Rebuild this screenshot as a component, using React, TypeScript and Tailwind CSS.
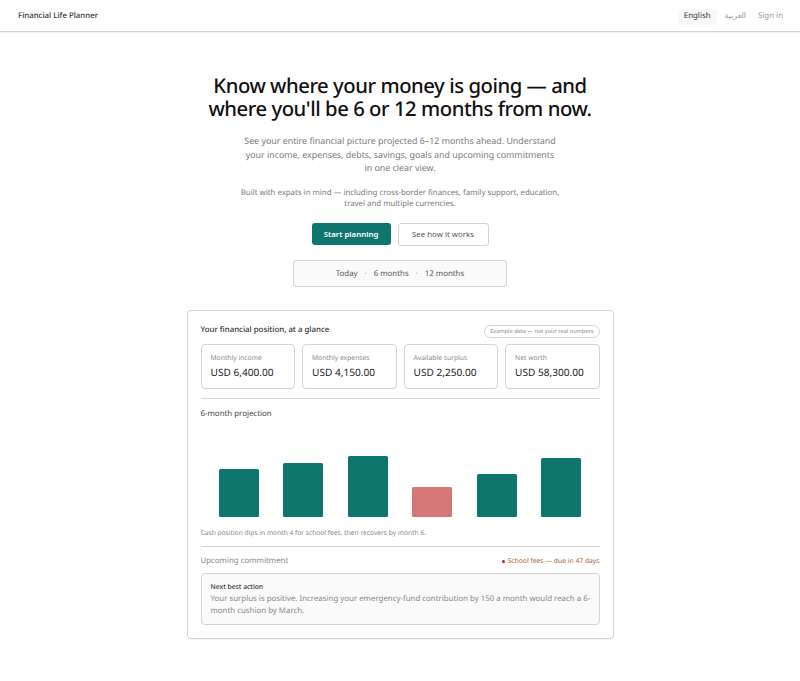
const metrics = [
  ["Monthly income", "USD 6,400.00"],
  ["Monthly expenses", "USD 4,150.00"],
  ["Available surplus", "USD 2,250.00"],
  ["Net worth", "USD 58,300.00"],
];
const bars = [
  { h: "h-[47.5px]", c: "bg-[#0f766e]" },
  { h: "h-[54px]", c: "bg-[#0f766e]" },
  { h: "h-[60.5px]", c: "bg-[#0f766e]" },
  { h: "h-[30px]", c: "bg-[#d77676]" },
  { h: "h-[43px]", c: "bg-[#0f766e]" },
  { h: "h-[58.5px]", c: "bg-[#0f766e]" },
];

export default function App() {
  return (
    <div className="min-h-[681px] bg-white font-['Noto_Sans',sans-serif] text-[#111827] [text-rendering:geometricPrecision]">
      <header className="flex h-[32px] items-center justify-between border-b border-[#d4d4d4] pt-[3px] pr-[17px] pl-[18px] shadow-[0_1px_1px_rgba(0,0,0,0.04)]">
        <div className="text-[7.875px] font-medium text-[#333333]">Financial Life Planner</div>
        <div className="flex items-center gap-[2px] text-[7.875px]">
          <span className="rounded-[4px] bg-[#f8f8f8] px-[6px] py-[2px] text-[#333333]">English</span>
          <span className="px-[6px] py-[2px] text-[#999999]">العربية</span>
          <span className="py-[2px] pl-[4px] text-[#999999]">Sign in</span>
        </div>
      </header>
      <main className="flex flex-col items-center pt-[42px]">
        <h1 className="text-center text-[20.25px] leading-[23px] font-medium tracking-[-0.45px] text-[#111111]">
          Know where your money is going — and
          <br />
          where you'll be 6 or 12 months from now.
        </h1>
        <p className="mt-[15px] w-[316px] text-center text-[8.85px] leading-[13.5px] text-[#7a7a7a]">
          See your entire financial picture projected 6–12 months ahead. Understand your income, expenses, debts, savings, goals and upcoming commitments in one clear view.
        </p>
        <p className="mt-[12px] w-[330px] text-center text-[7.83px] leading-[11.5px] text-[#7a7a7a]">
          Built with expats in mind — including cross-border finances, family support, education, travel and multiple currencies.
        </p>
        <div className="mt-[12px] flex items-center gap-[7px]">
          <button className="flex h-[22px] w-[79px] items-center justify-center rounded-[3px] bg-[#0f766e] pt-[1px] text-[7.875px] font-semibold text-white">Start planning</button>
          <button className="flex h-[23px] w-[91px] items-center justify-center rounded-[3px] border border-[#d4d4d4] bg-white pt-[1px] text-[7.875px] text-[#555555]">See how it works</button>
        </div>
        <div className="mt-[14px] flex h-[27px] w-[214px] items-center justify-center gap-[7px] rounded-[3px] border border-[#d4d4d4] bg-[#fafafa] pt-[3px] text-[7.875px] text-[#555555]">
          <span>Today</span>
          <span className="text-[#999999]">·</span>
          <span>6 months</span>
          <span className="text-[#999999]">·</span>
          <span>12 months</span>
        </div>
        <section className="mt-[23px] w-[427px] rounded-[4px] border border-[#d4d4d4] px-[13px] pt-[14px] pb-[13px] shadow-[0_1px_1px_rgba(0,0,0,0.05)]">
          <div className="flex items-center justify-between">
            <div className="text-[7.875px] font-medium text-[#333333]">Your financial position, at a glance</div>
            <div className="rounded-full border border-[#d4d4d4] px-[5px] py-[1.5px] text-[5.625px] text-[#888888]">Example data — not your real numbers</div>
          </div>
          <div className="mt-[6px] grid grid-cols-4 gap-[7px]">
            {metrics.map(([label, value]) => (
              <div key={label} className="h-[45px] rounded-[4px] border border-[#d4d4d4] px-[9px] pt-[7px]">
                <div className="text-[6.75px] leading-[11px] text-[#888888]">{label}</div>
                <div className="mt-[2px] text-[10.125px] leading-[14px] text-[#222222]">{value}</div>
              </div>
            ))}
          </div>
          <div className="mt-[9px] border-t border-[#d4d4d4]" />
          <div className="mt-[9px] text-[7.875px] leading-[12px] text-[#444444]">6-month projection</div>
          <div className="mt-[36.5px] grid h-[60.5px] grid-cols-6 items-end justify-items-center px-[6px]">
            {bars.map((b, i) => (
              <div key={i} className={`w-[40px] rounded-[1.5px] ${b.h} ${b.c}`} />
            ))}
          </div>
          <div className="mt-[10.5px] text-[6.67px] leading-[11px] text-[#888888]">Cash position dips in month 4 for school fees, then recovers by month 6.</div>
          <div className="mt-[8px] border-t border-[#d4d4d4]" />
          <div className="mt-[8px] flex items-center justify-between">
            <div className="text-[7.875px] leading-[12px] text-[#888888]">Upcoming commitment</div>
            <div className="flex items-center gap-[3px] text-[6.75px] text-[#b45a34]">
              <span className="h-[3px] w-[3px] rounded-full bg-[#b91c1c]" />
              <span>School fees — due in 47 days</span>
            </div>
          </div>
          <div className="mt-[6px] rounded-[4px] border border-[#d4d4d4] bg-[#fafafa] pt-[7px] pr-[6px] pb-[7px] pl-[9px]">
            <div className="text-[6.75px] leading-[11px] font-medium text-[#333333]">Next best action</div>
            <div className="mt-[2px] text-[7.875px] leading-[11.5px] text-[#888888]">Your surplus is positive. Increasing your emergency-fund contribution by 150 a month would reach a 6-month cushion by March.</div>
          </div>
        </section>
      </main>
    </div>
  );
}
